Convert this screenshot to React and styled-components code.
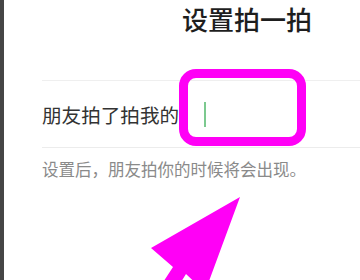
import React from "react";
import styled, { createGlobalStyle } from "styled-components";

const GlobalStyle = createGlobalStyle`
  html, body {
    margin: 0;
    padding: 0;
    background: #ffffff;
  }
  body {
    font-family: "Noto Sans CJK SC", "Noto Sans", sans-serif;
  }
`;

const Screen = styled.div`
  position: relative;
  display: flex;
  width: 360px;
  height: 280px;
  overflow: hidden;
  background: #ffffff;
`;

const EdgeStrip = styled.div`
  flex: 0 0 4px;
  background: #454545;
`;

const Page = styled.div`
  flex: 1;
  display: flex;
  flex-direction: column;
`;

const Header = styled.div`
  height: 80px;
  box-sizing: border-box;
  padding: 2px 0 0 178px;
`;

const Title = styled.h1`
  margin: 0;
  font-size: 26px;
  line-height: 34px;
  font-weight: 500;
  color: #1e1e1e;
  white-space: nowrap;
`;

const Section = styled.div`
  margin-left: 38px;
`;

const Row = styled.div`
  display: flex;
  align-items: center;
  height: 66px;
  border-top: 1px solid #efefef;
  border-bottom: 1px solid #ececec;
`;

const Label = styled.span`
  font-size: 19.6px;
  color: #333333;
  white-space: nowrap;
`;

const Caret = styled.span`
  width: 2px;
  height: 25px;
  margin-left: 25px;
  background: #7cc98f;
`;

const Hint = styled.p`
  margin: 9px 0 0;
  font-size: 16.5px;
  line-height: 24px;
  color: #8a8a8a;
  white-space: nowrap;
`;

const Highlight = styled.div`
  position: absolute;
  left: 179px;
  top: 69px;
  width: 127px;
  height: 77px;
  box-sizing: border-box;
  border: 9px solid #ff00f6;
  border-radius: 17px;
`;

const ArrowMark = styled.svg`
  position: absolute;
  left: 0;
  top: 0;
  width: 360px;
  height: 280px;
  pointer-events: none;
`;

export default function App() {
  return (
    <>
      <GlobalStyle />
      <Screen>
        <EdgeStrip />
        <Page>
          <Header>
            <Title>设置拍一拍</Title>
          </Header>
          <Section>
            <Row>
              <Label>朋友拍了拍我的</Label>
              <Caret />
            </Row>
            <Hint>设置后，朋友拍你的时候将会出现。</Hint>
          </Section>
        </Page>
        <Highlight />
        <ArrowMark viewBox="0 0 360 280">
          <polygon
            points="240,197 151,248 173,267 158,290 176,290 186,274 205,292"
            fill="#ff00f6"
          />
        </ArrowMark>
      </Screen>
    </>
  );
}
